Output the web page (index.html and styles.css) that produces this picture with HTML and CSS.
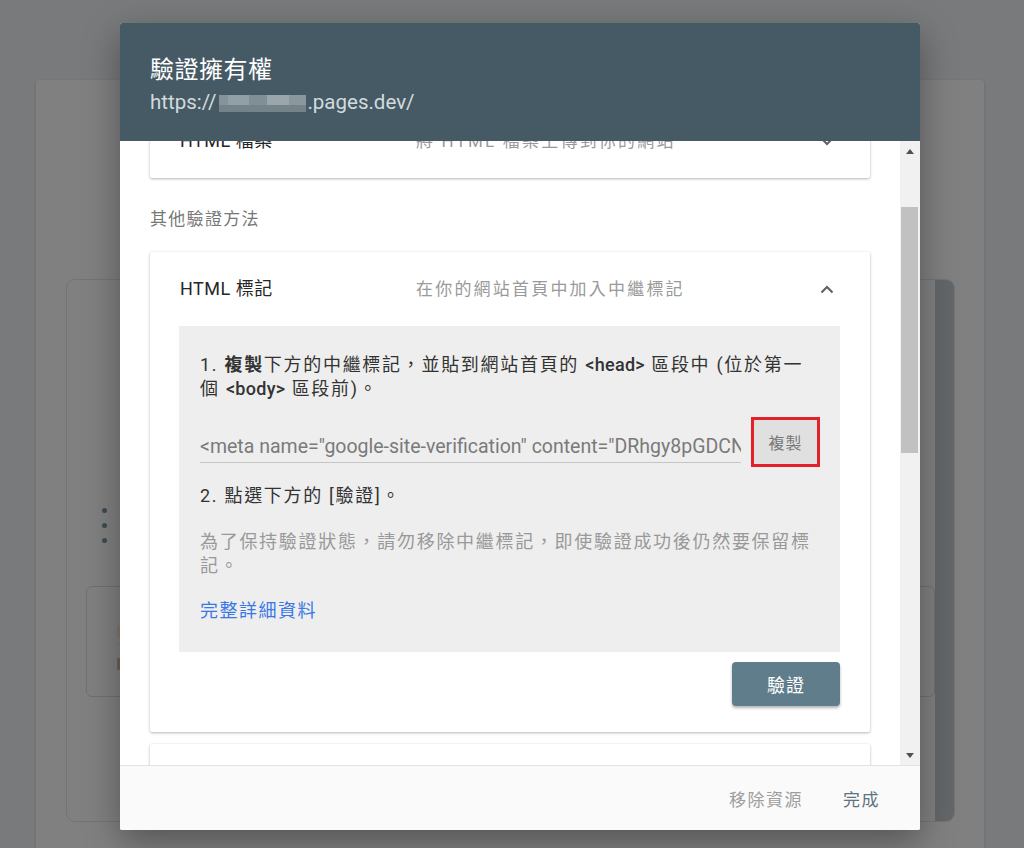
FILE: index.html
```html
<!DOCTYPE html>
<html lang="zh-Hant">
<head>
    <meta charset="UTF-8">
    <meta name="viewport" content="width=device-width, initial-scale=1.0">
    <title>驗證擁有權</title>
    <link rel="stylesheet" href="styles.css">
</head>
<body>
    <!-- dimmed page behind the dialog -->
    <div class="page">
        <div class="page-card">
            <div class="page-box">
                <div class="page-main">
                    <ul class="dots">
                        <li></li>
                        <li></li>
                        <li></li>
                    </ul>
                    <div class="page-inner">
                        <div class="inner-line orange"></div>
                        <div class="inner-rule"></div>
                        <div class="inner-line brown"></div>
                    </div>
                </div>
                <div class="page-side"></div>
            </div>
        </div>
    </div>

    <div class="dialog">
        <div class="dialog-header">
            <div class="dialog-title">驗證擁有權</div>
            <div class="dialog-url">https://<span class="blur"></span>.pages.dev/</div>
        </div>

        <div class="dialog-body">
            <div class="scroll-content">
                <div class="method collapsed">
                    <div class="method-head">
                        <span class="method-name">HTML 檔案</span>
                        <span class="method-desc">將 HTML 檔案上傳到你的網站</span>
                        <svg class="chevron" width="14" height="9" viewBox="0 0 14 9"><polyline points="1.5,1.5 7,7 12.5,1.5" fill="none" stroke="#5f5f5f" stroke-width="2"/></svg>
                    </div>
                </div>

                <div class="section-label">其他驗證方法</div>

                <div class="method">
                    <div class="method-head">
                        <span class="method-name">HTML 標記</span>
                        <span class="method-desc">在你的網站首頁中加入中繼標記</span>
                        <svg class="chevron" width="14" height="9" viewBox="0 0 14 9"><polyline points="1.5,7.5 7,2 12.5,7.5" fill="none" stroke="#5f5f5f" stroke-width="2"/></svg>
                    </div>
                    <div class="method-detail">
                        <p class="step">1. <b>複製</b>下方的中繼標記，並貼到網站首頁的 <b class="code">&lt;head&gt;</b> 區段中 (位於第一<br>個 <b class="code">&lt;body&gt;</b> 區段前)。</p>
                        <div class="tag-row">
                            <div class="tag-field">&lt;meta name="google-site-verification" content="DRhgy8pGDCNq3kXv0rM2sWfT8bLzQe5uYcHa1iJ7oPk" /&gt;</div>
                            <button class="copy-btn">複製</button>
                        </div>
                        <p class="step step-2">2. 點選下方的 [驗證]。</p>
                        <p class="note">為了保持驗證狀態，請勿移除中繼標記，即使驗證成功後仍然要保留標<br>記。</p>
                        <a class="more-link" href="#">完整詳細資料</a>
                    </div>
                    <div class="method-actions">
                        <button class="verify-btn">驗證</button>
                    </div>
                </div>

                <div class="method next"></div>
            </div>
            <div class="scrollbar">
                <div class="arrow up"></div>
                <div class="track">
                    <div class="thumb"></div>
                </div>
                <div class="arrow down"></div>
            </div>
        </div>

        <div class="dialog-footer">
            <button class="text-btn disabled">移除資源</button>
            <button class="text-btn">完成</button>
        </div>
    </div>
</body>
</html>
```

FILE: styles.css
```css
body {
    margin: 0;
    height: 848px;
    overflow: hidden;
    background-color: #797a7b;
    font-family: "Roboto", "Noto Sans CJK TC", sans-serif;
}

/* background page (dimmed) */
.page {
    padding: 80px 40px 0 36px;
}
.page-card {
    height: 800px;
    background-color: #808080;
    border-radius: 3px;
    box-shadow: 0 1px 3px rgba(0,0,0,0.15);
    padding: 199px 29px 0 30px;
    box-sizing: border-box;
}
.page-box {
    display: flex;
    height: 541px;
    border: 1px solid #747474;
    border-radius: 9px;
    overflow: hidden;
}
.page-main {
    flex: 1;
    padding: 228px 0 0 19px;
}
.page-side {
    width: 300px;
    background-color: #636769;
}
.dots {
    list-style: none;
    margin: 0;
    padding: 0 0 0 16px;
}
.dots li {
    width: 5px;
    height: 5px;
    border-radius: 50%;
    background-color: #3e4a52;
    margin-bottom: 10px;
}
.page-inner {
    margin-top: 43px;
    width: 849px;
    height: 111px;
    border: 1px solid #707070;
    border-radius: 6px;
    padding: 38px 0 0 30px;
    box-sizing: border-box;
}
.inner-line {
    width: 10px;
    height: 12px;
}
.inner-line.orange {
    background-color: #85776a;
}
.inner-line.brown {
    margin-top: 14px;
    background-color: #6e6258;
}
.inner-rule {
    margin-top: 6px;
    width: 20px;
    border-top: 1px solid #777;
}

/* dialog */
.dialog {
    position: absolute;
    left: 120px;
    top: 23px;
    width: 800px;
    height: 807px;
    display: flex;
    flex-direction: column;
    background-color: #fff;
    border-radius: 2px;
    overflow: hidden;
    box-shadow: 0 12px 36px rgba(0,0,0,0.35);
}
.dialog-header {
    height: 118px;
    flex: 0 0 118px;
    box-sizing: border-box;
    padding: 31px 30px 0 30px;
    background-color: #465a65;
    position: relative;
    z-index: 2;
}
.dialog-title {
    font-size: 24px;
    line-height: 32px;
    letter-spacing: 0.5px;
    color: #fff;
}
.dialog-url {
    margin-top: 4px;
    font-size: 20.5px;
    line-height: 24px;
    color: #d2dade;
    display: flex;
    align-items: center;
}
.blur {
    display: inline-block;
    width: 87px;
    height: 17px;
    margin: 3px 1px 0 3px;
    background:
        linear-gradient(to bottom, transparent 0 60%, #74838a 60% 100%) 0 0 / 100% 100% no-repeat,
        linear-gradient(to right, #85939a 0 10%, #929fa5 10% 35%, #808f96 35% 55%, #9aa6ab 55% 80%, #8a989e 80% 100%);
    background-color: #8c999e;
}

.dialog-body {
    flex: 1;
    display: flex;
    min-height: 0;
}
.scroll-content {
    flex: 1;
    overflow: hidden;
    padding: 0 30px;
}

.method {
    background-color: #fff;
    border-radius: 2px;
    box-shadow: 0 1px 3px rgba(0,0,0,0.28), 0 0 1px rgba(0,0,0,0.08);
}
.method.collapsed {
    margin-top: -37px;
}
.method.next {
    margin-top: 12px;
    height: 40px;
}
.method-head {
    height: 74px;
    box-sizing: border-box;
    padding: 0 36px 4px 30px;
    display: flex;
    align-items: center;
}
.method-name {
    width: 236px;
    font-size: 18px;
    letter-spacing: 0.5px;
    color: #262626;
}
.method-desc {
    flex: 1;
    font-size: 17px;
    letter-spacing: 2.2px;
    color: #9a9a9a;
}
.chevron {
    display: block;
    margin-top: 4px;
}

.section-label {
    margin: 29px 0 21px;
    font-size: 17px;
    line-height: 24px;
    letter-spacing: 1.3px;
    color: #777;
}

.method-detail {
    margin: 0 30px 0 29px;
    padding: 27px 10px 29px 21px;
    background-color: #eeeeee;
    font-size: 18px;
    letter-spacing: 1.7px;
    color: #333;
}
.step {
    margin: 0;
    line-height: 24px;
    white-space: nowrap;
}
.step b {
    font-weight: 600;
}
.step .code {
    font-weight: 500;
    letter-spacing: 0.3px;
}
.tag-row {
    display: flex;
    align-items: center;
    margin-top: 16px;
    height: 50px;
}
.tag-field {
    width: 541px;
    height: 30px;
    line-height: 30px;
    margin-top: 10px;
    overflow: hidden;
    white-space: nowrap;
    letter-spacing: 0;
    font-size: 19.5px;
    color: #7a7a7a;
    border-bottom: 1px solid #c4c4c4;
}
.copy-btn {
    margin-left: 10px;
    width: 69px;
    height: 50px;
    border: 3px solid #e3212b;
    background-color: #e0e0e0;
    color: #777;
    font-family: inherit;
    font-size: 16px;
    letter-spacing: 1px;
    padding: 0;
}
.step-2 {
    margin-top: 17px;
}
.note {
    margin: 22px 0 0;
    line-height: 24px;
    color: #999;
    white-space: nowrap;
}
.more-link {
    display: block;
    margin-top: 21px;
    line-height: 24px;
    color: #3a77e6;
    text-decoration: none;
    letter-spacing: 1.5px;
}

.method-actions {
    display: flex;
    justify-content: flex-end;
    padding: 10px 30px 26px 0;
}
.verify-btn {
    width: 108px;
    height: 44px;
    border: none;
    border-radius: 4px;
    background-color: #607d8b;
    color: #fff;
    font-family: inherit;
    font-size: 18px;
    letter-spacing: 1px;
    box-shadow: 0 2px 3px rgba(0,0,0,0.3);
}

/* fake classic scrollbar */
.scrollbar {
    width: 20px;
    display: flex;
    flex-direction: column;
    background-color: #f1f1f1;
}
.arrow {
    height: 20px;
    display: flex;
    align-items: center;
    justify-content: center;
}
.arrow::before {
    content: "";
    border-left: 4px solid transparent;
    border-right: 4px solid transparent;
}
.arrow.up::before {
    border-bottom: 5px solid #505050;
}
.arrow.down::before {
    border-top: 5px solid #505050;
}
.track {
    flex: 1;
    padding: 46px 2px 0 1px;
}
.thumb {
    height: 246px;
    background-color: #c1c1c1;
}

.dialog-footer {
    flex: 0 0 65px;
    display: flex;
    align-items: center;
    justify-content: flex-end;
    gap: 40px;
    padding-right: 40px;
    background-color: #fafafa;
    border-top: 1px solid #e2e2e2;
    box-sizing: border-box;
}
.text-btn {
    border: none;
    background: none;
    padding: 0;
    font-family: inherit;
    font-size: 17px;
    letter-spacing: 1.5px;
    color: #5e7380;
}
.text-btn.disabled {
    color: #9e9e9e;
}
```
